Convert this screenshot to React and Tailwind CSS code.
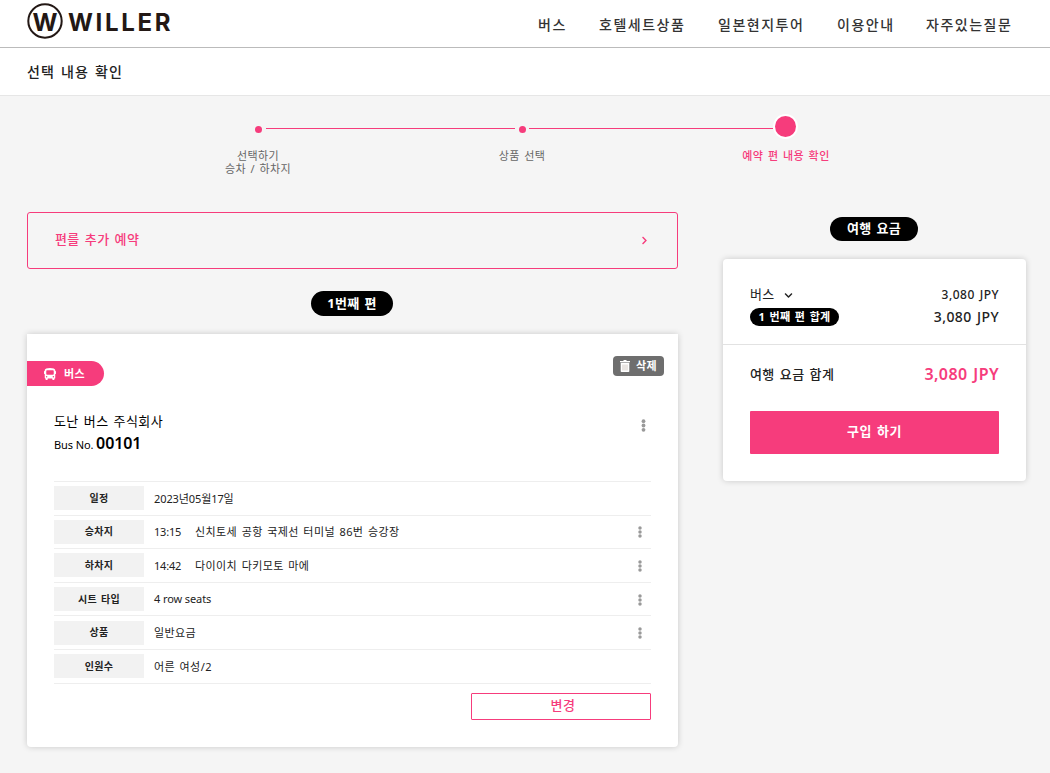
import { FaBus, FaChevronDown, FaChevronRight } from 'react-icons/fa';

const NAV_ITEMS = [
  { label: '버스', width: 'w-[29px]' },
  { label: '호텔세트상품', width: 'w-[87px]' },
  { label: '일본현지투어', width: 'w-[87px]' },
  { label: '이용안내', width: 'w-[57px]' },
  { label: '자주있는질문', width: 'w-[87px]' },
];

const DETAILS = [
  { label: '일정', value: '2023년05월17일', tight: true },
  { label: '승차지', time: '13:15', value: '신치토세 공항 국제선 터미널 86번 승강장', menu: true },
  { label: '하차지', time: '14:42', value: '다이이치 다키모토 마에', menu: true },
  { label: '시트 타입', value: '4 row seats', menu: true, tight: true },
  { label: '상품', value: '일반요금', menu: true },
  { label: '인원수', value: '어른 여성/2' },
];

function Logo() {
  return (
    <svg
      className="block tracking-normal"
      width="146"
      height="40"
      viewBox="0 0 146 40"
      fill="#231815"
      fontFamily="Inter, sans-serif"
      fontWeight="700"
      role="img"
      aria-label="WILLER"
    >
      <circle cx="18" cy="19" r="16.7" fill="none" stroke="#231815" strokeWidth="2" />
      <text x="5.6" y="28.5" fontSize="24" textLength="25" lengthAdjust="spacingAndGlyphs">
        W
      </text>
      <text x="41" y="28.5" fontSize="24" textLength="102.5" lengthAdjust="spacing">
        WILLER
      </text>
    </svg>
  );
}

function MoreIcon({ large }) {
  return (
    <svg width={large ? 5 : 4} height={large ? 13 : 12} viewBox="0 0 4 12" fill="#999">
      <circle cx="2" cy="2" r="1.75" />
      <circle cx="2" cy="6" r="1.75" />
      <circle cx="2" cy="10" r="1.75" />
    </svg>
  );
}

function TrashIcon() {
  return (
    <svg width="10" height="12" viewBox="0 0 10 12" fill="none">
      <path d="M3.5 0h3v1H10v1.3H0V1h3.5z" fill="#fff" />
      <path d="M.7 2.8h8.6v8.4a.8.8 0 0 1-.8.8h-7a.8.8 0 0 1-.8-.8z" fill="#fff" />
      <path d="M3 4.5v6M5 4.5v6M7 4.5v6" stroke="#b5a9a0" strokeWidth=".6" />
    </svg>
  );
}

function Stepper() {
  return (
    <div className="h-[116px] pt-5">
      <div className="flex h-[21px] pl-[254.5px]">
        <span className="mt-[10px] mr-[0.5px] size-[7px] rounded-full bg-[#f63c7c]" />
        <span className="mt-3 ml-1 h-px w-[249px] bg-[#f63c7c]" />
        <span className="mt-[10px] mr-[0.5px] ml-[3.5px] size-[7px] rounded-full bg-[#f63c7c]" />
        <span className="mt-3 ml-[3px] h-px w-[244px] bg-[#f63c7c]" />
        <span className="ml-[2px] size-[21px] rounded-full bg-[#f63c7c] ring-2 ring-white" />
      </div>
      <div className="ml-[126px] grid w-[792px] grid-cols-3 pt-[12px] text-center text-[11px] leading-[13px] tracking-[0.4px] text-[#666]">
        <p>
          선택하기
          <br />
          승차 / 하차지
        </p>
        <p>상품 선택</p>
        <p className="font-medium text-[#f63c7c]">예약 편 내용 확인</p>
      </div>
    </div>
  );
}

function TripCard() {
  return (
    <section className="h-[413px] rounded-b bg-white shadow-[0_0_6px_rgba(0,0,0,0.18)]">
      <div className="flex h-[78px] items-start justify-between pr-[14px]">
        <div className="mt-[27px] flex h-[25px] w-[77px] items-center rounded-r-full bg-[#f63c7c] pl-[17px] text-[11px] font-bold text-white">
          <FaBus className="mr-2 size-3" />
          <span className="pt-px">버스</span>
        </div>
        <button className="mt-[22px] flex h-5 w-[51px] items-center rounded bg-[#6e6e6e] pl-[7px] text-[11px] font-bold text-white" type="button">
          <span className="mr-[6px]">
            <TrashIcon />
          </span>
          삭제
        </button>
      </div>

      <div className="flex h-[69px] justify-between pr-[32px] pl-[27px] text-black">
        <div>
          <p className="-mt-px text-[13px] leading-5 tracking-[0.4px]">도난 버스 주식회사</p>
          <p className="text-[11px] leading-6 tracking-[-0.1px] [word-spacing:0px]">
            Bus No. <strong className="text-base leading-6 font-semibold">00101</strong>
          </p>
        </div>
        <div className="pt-[7px]">
          <MoreIcon large />
        </div>
      </div>

      <dl className="mx-[27px] border-t border-[#eee] text-[11px] text-[#222]">
        {DETAILS.map((row) => (
          <div key={row.label} className="flex h-[33.6px] items-center border-b border-[#eee] pr-[9px]">
            <dt className="flex h-6 w-[90px] items-center justify-center bg-[#f2f2f2] text-[10px] font-bold">
              {row.label}
            </dt>
            <dd className="flex flex-1 items-center pt-px pl-[10px]">
              {row.time && <span className="w-[41px] tracking-[-0.2px]">{row.time}</span>}
              <span className={row.tight ? 'flex-1 tracking-[-0.1px] [word-spacing:0px]' : 'flex-1 tracking-[0.4px]'}>
                {row.value}
              </span>
              {row.menu && <MoreIcon />}
            </dd>
          </div>
        ))}
      </dl>

      <div className="flex justify-end pt-[9px] pr-[27px]">
        <button className="h-[27px] w-[180px] rounded-[1px] border border-[#f63c7c] pb-0.5 pl-1 text-[13px] leading-[23px] font-medium tracking-[0.6px] text-[#f63c7c]" type="button">
          변경
        </button>
      </div>
    </section>
  );
}

function FareSummary() {
  return (
    <aside className="flex w-[303px] flex-col pt-[5px]">
      <h2 className="mr-px h-6 w-[88px] self-center rounded-full bg-black text-center text-[13px] leading-[23px] font-bold text-white">
        여행 요금
      </h2>
      <div className="mt-[18px] h-[222px] rounded bg-white text-[#222] shadow-[0_0_6px_rgba(0,0,0,0.18)]">
        <div className="h-[86px] border-b border-[#e2e2e2] px-[27px] pt-[26px]">
          <div className="flex h-5 items-center justify-between">
            <span className="flex items-center text-[13px]">
              버스
              <FaChevronDown className="ml-[9px] size-[9px]" />
            </span>
            <span className="text-xs font-medium tracking-[0.5px]">3,080 JPY</span>
          </div>
          <div className="flex h-6 items-center justify-between">
            <span className="h-[18px] w-[89px] rounded-full bg-black text-center text-[11px] leading-[18px] font-bold text-white">
              1 번째 편 합계
            </span>
            <span className="text-sm font-medium tracking-[0.4px]">3,080 JPY</span>
          </div>
        </div>
        <div className="px-[27px] pt-[17px]">
          <div className="flex h-6 items-center justify-between font-medium">
            <span className="pt-px text-[13px] tracking-[0.4px]">여행 요금 합계</span>
            <span className="text-base font-semibold tracking-[0.4px] text-[#f63c7c]">3,080 JPY</span>
          </div>
          <button className="mt-[25px] h-[43px] w-full rounded-[1px] bg-[#f63c7c] pb-0.5 text-[13px] font-bold tracking-[0.5px] text-white [word-spacing:1.3px]" type="button">
            구입 하기
          </button>
        </div>
      </div>
    </aside>
  );
}

function App() {
  return (
    <div className="h-[773px] overflow-hidden bg-[#f5f5f5] font-['Noto_Sans','Noto_Sans_CJK_KR',sans-serif] tracking-[0.3px] text-[#222] [word-spacing:1.3px]">
      <header className="flex h-12 items-start justify-between border-b border-[#bbb] bg-white pr-[37px] pl-[27px]">
        <div className="pt-[2px]">
          <Logo />
        </div>
        <nav className="flex h-[49px] items-center gap-8 text-sm font-medium tracking-[1.5px] whitespace-nowrap text-[#333]">
          {NAV_ITEMS.map((item) => (
            <a key={item.label} className={item.width} href="#">
              {item.label}
            </a>
          ))}
        </nav>
      </header>

      <div className="h-12 border-b border-[#e6e6e6] bg-white pl-[27px]">
        <h1 className="text-sm leading-[48px] font-medium tracking-[1.1px]">선택 내용 확인</h1>
      </div>

      <Stepper />

      <main className="flex gap-[45px] pl-[27px]">
        <div className="flex w-[651px] flex-col">
          <a
            className="flex h-[57px] items-center justify-between rounded-[3px] border border-[#f63c7c] pr-[28px] pl-[27px] text-[13px] font-medium tracking-[0.4px] text-[#f63c7c]"
            href="#"
          >
            <span className="pb-px">편를 추가 예약</span>
            <FaChevronRight className="size-[9px]" />
          </a>
          <h2 className="mt-[22px] mr-px mb-[18px] h-[25px] w-[82px] self-center rounded-full bg-black text-center text-[13px] leading-[25px] font-bold text-white">
            1번째 편
          </h2>
          <TripCard />
        </div>
        <FareSummary />
      </main>
    </div>
  );
}

export default App;
